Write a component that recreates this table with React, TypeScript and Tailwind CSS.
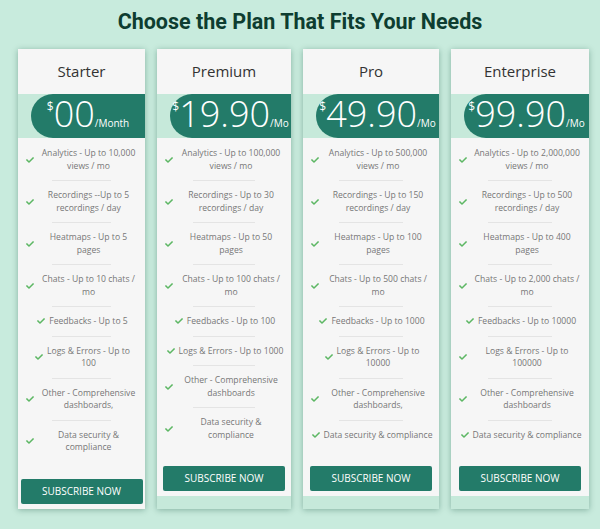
import React from 'react';

interface Plan {
  name: string;
  price: string;
  period: string;
  width: string;
  features: string[];
}

// "\n" marks where the original wraps a line
const plans: Plan[] = [
  {
    name: 'Starter',
    price: '00',
    period: '/Month',
    width: 'w-[127px]',
    features: [
      'Analytics - Up to 10,000 views / mo',
      'Recordings --Up to 5 recordings / day',
      'Heatmaps - Up to 5 pages',
      'Chats - Up to 10 chats / mo',
      'Feedbacks - Up to 5',
      'Logs & Errors - Up to\n100',
      'Other - Comprehensive dashboards,',
      'Data security & compliance',
    ],
  },
  {
    name: 'Premium',
    price: '19.90',
    period: '/Mo',
    width: 'w-[134px]',
    features: [
      'Analytics - Up to 100,000 views / mo',
      'Recordings - Up to 30 recordings / day',
      'Heatmaps - Up to 50 pages',
      'Chats - Up to 100 chats / mo',
      'Feedbacks - Up to 100',
      'Logs & Errors - Up to 1000',
      'Other - Comprehensive dashboards',
      'Data security & compliance',
    ],
  },
  {
    name: 'Pro',
    price: '49.90',
    period: '/Mo',
    width: 'w-[136px]',
    features: [
      'Analytics - Up to 500,000 views / mo',
      'Recordings - Up to 150 recordings / day',
      'Heatmaps - Up to 100 pages',
      'Chats - Up to 500 chats / mo',
      'Feedbacks - Up to 1000',
      'Logs & Errors - Up to\n10000',
      'Other - Comprehensive dashboards,',
      'Data security & compliance',
    ],
  },
  {
    name: 'Enterprise',
    price: '99.90',
    period: '/Mo',
    width: 'w-[138px]',
    features: [
      'Analytics - Up to 2,000,000 views / mo',
      'Recordings - Up to 500 recordings / day',
      'Heatmaps - Up to 400 pages',
      'Chats - Up to 2,000 chats / mo',
      'Feedbacks - Up to 10000',
      'Logs & Errors - Up to 100000',
      'Other - Comprehensive dashboards',
      'Data security & compliance',
    ],
  },
];

const Check = () => (
  <svg viewBox="0 0 512 512" className="h-[8px] w-[8px] shrink-0 fill-[#5db764]">
    <path d="M173.898 439.404l-166.4-166.4c-9.997-9.997-9.997-26.206 0-36.204l36.203-36.204c9.997-9.998 26.207-9.998 36.204 0L192 312.69 432.095 72.596c9.997-9.997 26.207-9.997 36.204 0l36.203 36.204c9.997 9.997 9.997 26.206 0 36.204l-294.4 294.401c-9.998 9.997-26.207 9.997-36.204-.001z" />
  </svg>
);

const PlanCard: React.FC<{ plan: Plan }> = ({ plan }) => {
  return (
    <div className={`${plan.width} flex shrink-0 flex-col overflow-hidden bg-[#f6f6f6] shadow-[0_1px_6px_rgba(10,70,50,0.35)]`}>
      <div className="flex h-[45px] items-center justify-center text-[15px] text-[#333]">{plan.name}</div>
      <div className="flex h-[44px] bg-[#c6e9da] pl-[13px]">
        <div className="min-w-0 flex-1 whitespace-nowrap rounded-l-full bg-[#237b69] text-center leading-[40px] text-white">
          <span className="relative top-[-16px] text-[12px]">$</span>
          <span className="text-[36px] font-light">{plan.price}</span>
          <span className="text-[10px]">{plan.period}</span>
        </div>
      </div>
      <ul className="pt-px">
        {plan.features.map((f, i) => (
          <li key={i}>
            {i > 0 && <div className="mx-auto h-px w-[47%] bg-[#e4e4e4]" />}
            <div className="flex items-center justify-center gap-[4px] py-2 pl-2 pr-1.5">
              <Check />
              <span className="whitespace-pre-line text-center text-[8.6px] leading-[12.5px] text-[#777]">{f}</span>
            </div>
          </li>
        ))}
      </ul>
      <div className="pb-[5px] pt-[17px]">
        <button className="mx-auto block h-[25px] w-[122px] rounded-[2px] bg-[#237b69] text-[10px] uppercase text-white">
          Subscribe Now
        </button>
      </div>
      <div className="flex-1 bg-[#c6e9da]" />
    </div>
  );
};

export default function App() {
  return (
    <div className="h-[529px] w-[600px] bg-[#c8ebdd] font-['Open_Sans',sans-serif]">
      <h1 className="pt-[9px] text-center font-['Roboto',sans-serif] text-[21.5px] font-bold leading-[26px] text-[#0e3d30]">
        Choose the Plan That Fits Your Needs
      </h1>
      <div className="mt-[14px] flex items-stretch gap-[12px] pl-[18px]">
        {plans.map((p) => (
          <PlanCard key={p.name} plan={p} />
        ))}
      </div>
    </div>
  );
}
